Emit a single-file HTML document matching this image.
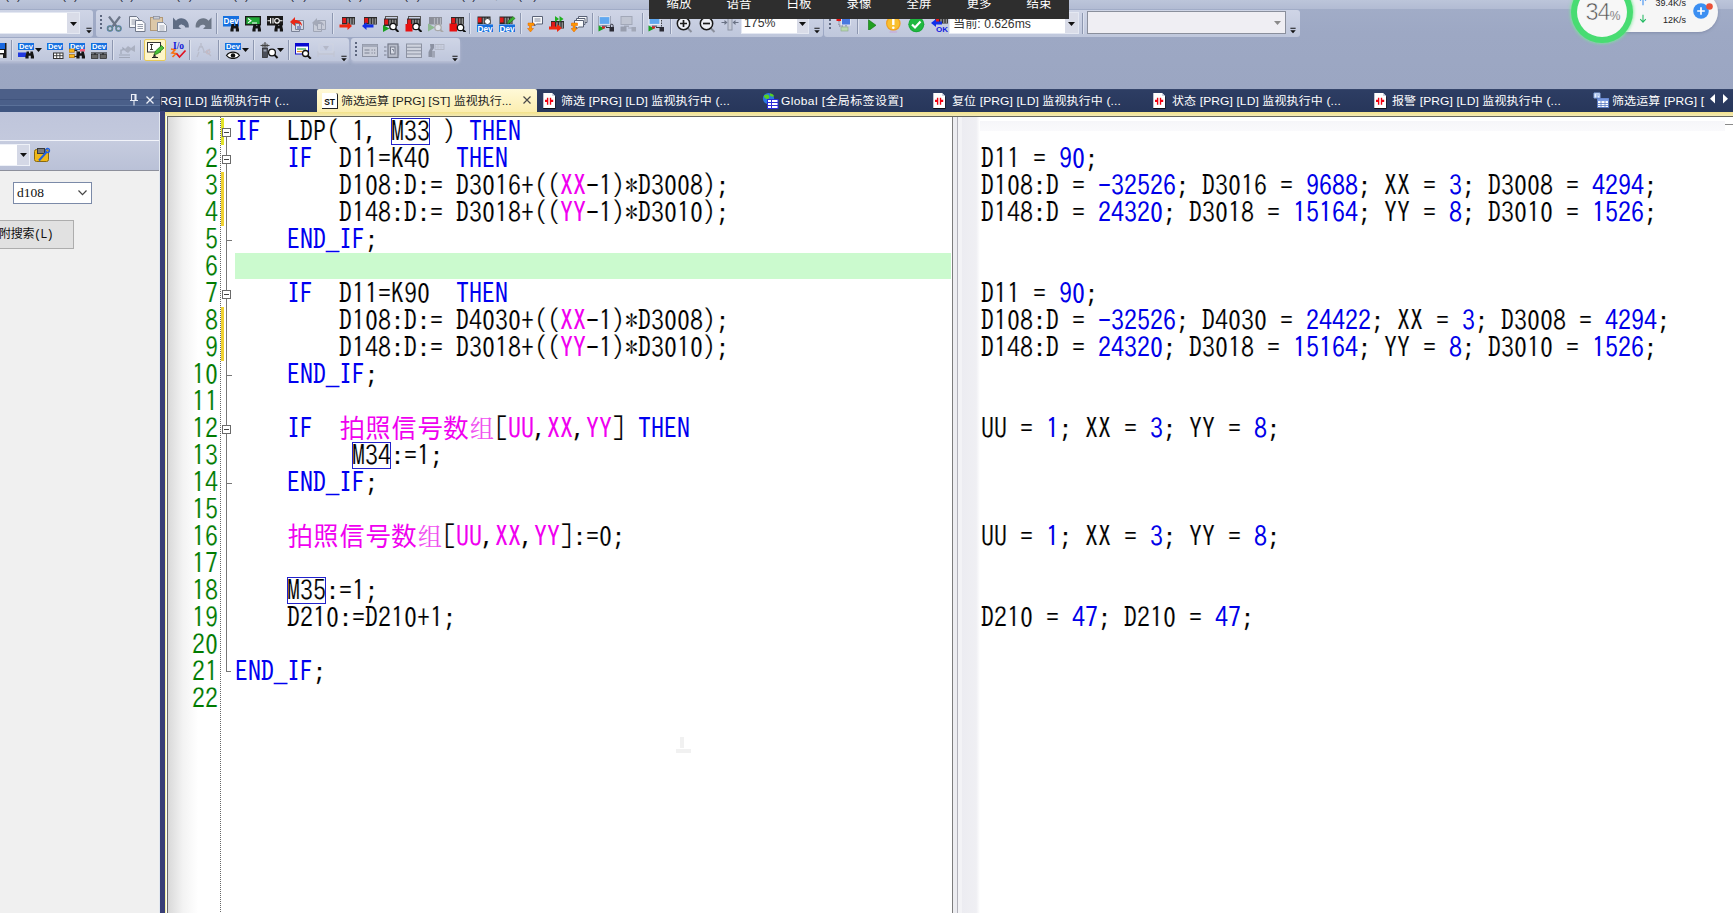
<!DOCTYPE html>
<html lang="zh"><head><meta charset="utf-8"><title>MELSOFT GX Works2</title>
<style>
*{box-sizing:border-box}
html,body{margin:0;padding:0}
body{width:1733px;height:913px;overflow:hidden;position:relative;background:#9fa9c4;font-family:"Liberation Sans","Noto Sans CJK SC",sans-serif;font-size:12px;color:#000}
.a{position:absolute}
/* top area */
#menubar{left:0;top:0;width:1733px;height:9px;background:linear-gradient(#bcc5da,#b2bbd3)}
#tbbg{left:0;top:9px;width:1733px;height:80px;background:linear-gradient(#a1acc7 0,#9da8c4 30%,#9ba6c2 100%)}
.tbp{background:linear-gradient(#cfd5e6,#bfc7dc);border-radius:3px}
/* tab bar */
#tabbar{left:0;top:89px;width:1733px;height:23px;background:linear-gradient(#3a4a70 0,#2d3d63 6%,#27365a 100%)}
#lefttitle{left:0;top:89px;width:160px;height:23px;background:linear-gradient(#4c5f88 0,#4c5f88 43%,#3d5079 44%,#4a5f89 50%,#4a5f89 68%,#6f86ad 70%,#3f5580 74%,#3f5580 100%)}
.tab{top:89.600px;height:22px;line-height:22px;letter-spacing:.12px;transform:scaleY(.9);transform-origin:0 75%;color:#fff;white-space:pre;font-size:12px}
#acttab{left:317px;top:89px;width:220px;height:23px;background:linear-gradient(#fff9d8,#fbeeb0);border-radius:2px 2px 0 0}
#yline{left:165px;top:111.500px;width:1568px;height:4.500px;background:linear-gradient(#f4e28a,#f2e9b6)}
#dline{left:166.500px;top:115.500px;width:1567px;height:1.500px;background:#66665c}
#dline2{left:166.500px;top:115.500px;width:1.500px;height:798px;background:#6a6a6a}
/* left panel */
#lp{left:0;top:112px;width:160px;height:801px;background:#f0f0f0}
#lp1{left:0;top:112px;width:160px;height:28px;background:linear-gradient(#bfc5db,#c3c9dd)}
#lp2{left:0;top:139.500px;width:160px;height:31px;background:linear-gradient(#c6ccdf,#bac1d7);border-top:1.500px solid #f2f4fa;border-bottom:1.500px solid #8d909c}
#vsplit{left:160px;top:111px;width:5px;height:802px;background:#393f76}
#lpedge{left:158.500px;top:112px;width:1.500px;height:801px;background:#e2e8f0}
/* editor */
#ed{left:165px;top:116px;width:787px;height:797px;background:#fff;border-left:1.500px solid #f3efa0}
#edgrad{left:168px;top:117px;width:30px;height:796px;background:linear-gradient(90deg,#d9d9d9,#f3f3f3 50%,#fff)}
#msplit{left:952px;top:117px;width:10px;height:796px;background:linear-gradient(90deg,#7c7c7c 0,#7c7c7c 10%,#ededf1 11%,#ededf1 50%,#b2b2ba 51%,#b2b2ba 60%,#f3f3f6 61%,#f3f3f6 100%)}
#rp{left:961px;top:116px;width:772px;height:797px;background:#fff}
#rpgrad{left:961px;top:117px;width:19px;height:796px;background:linear-gradient(90deg,#ececf1 0,#efeff3 80%,#fff 100%)}
.code{font-family:"IPAGothic","Liberation Mono","Noto Sans CJK SC",monospace;font-size:26px;line-height:27px;white-space:pre;tab-size:4;color:#000;transform:scaleY(1.05);transform-origin:0 36%;-webkit-text-stroke:0.15px #fff}
.ln{left:168px;width:50px;text-align:right;color:#007a00}
.k{color:#0000f0;-webkit-text-stroke:0}.m{color:#f000f0;-webkit-text-stroke:0}.v{color:#0000e8;-webkit-text-stroke:0}
.z{font-family:"Noto Sans Mono CJK SC","IPAGothic",monospace;line-height:0}
.zu{font-family:"Noto Serif CJK SC","Noto Sans CJK SC",serif;font-weight:400;line-height:0;display:inline-block;width:26px;text-align:center;font-size:24px;color:#f050f0}
.u{-webkit-text-stroke:0.700px #0000f0}
.bx{width:39px;height:27px;border:1px solid #2222cc}
#hl{left:235px;top:253px;width:716px;height:26px;background:#cbface}
</style></head><body>
<div class="a" id="menubar"></div>
<div class="a" id="tbbg"></div>
<div class="a" id="tabbar"></div>
<div class="a" id="lefttitle"></div>
<div class="a" id="acttab"></div>
<div class="a" id="yline"></div>
<div class="a" id="lp"></div><div class="a" id="lp1"></div><div class="a" id="lp2"></div>
<div class="a" id="vsplit"></div><div class="a" id="lpedge"></div>
<div class="a" id="ed"></div><div class="a" id="edgrad"></div>
<div class="a" id="rp"></div><div class="a" id="rpgrad"></div>
<div class="a" id="msplit"></div>
<div class="a" id="hl"></div>
<div class="a" id="dline"></div><div class="a" id="dline2"></div>
<!--EXTRA-->
<div class="a" style="left:-19px;top:-12.500px;font-size:12px;line-height:14px;color:#2a2a3a;white-space:pre">工程(P)</div>
<div class="a" style="left:38px;top:-12.500px;font-size:12px;line-height:14px;color:#2a2a3a;white-space:pre">编辑(E)</div>
<div class="a" style="left:95px;top:-12.500px;font-size:12px;line-height:14px;color:#2a2a3a;white-space:pre">搜索(F)</div>
<div class="a" style="left:152px;top:-12.500px;font-size:12px;line-height:14px;color:#2a2a3a;white-space:pre">转换(C)</div>
<div class="a" style="left:209px;top:-12.500px;font-size:12px;line-height:14px;color:#2a2a3a;white-space:pre">视图(V)</div>
<div class="a" style="left:266px;top:-12.500px;font-size:12px;line-height:14px;color:#2a2a3a;white-space:pre">在线(O)</div>
<div class="a" style="left:323px;top:-12.500px;font-size:12px;line-height:14px;color:#2a2a3a;white-space:pre">调试(B)</div>
<div class="a" style="left:380px;top:-12.500px;font-size:12px;line-height:14px;color:#2a2a3a;white-space:pre">诊断(D)</div>
<div class="a" style="left:437px;top:-12.500px;font-size:12px;line-height:14px;color:#2a2a3a;white-space:pre">工具(T)</div>
<div class="a" style="left:494px;top:-12.500px;font-size:12px;line-height:14px;color:#2a2a3a;white-space:pre">窗口(W)</div>
<div class="a" style="left:980px;top:120.500px;width:745px;height:10.500px;background:linear-gradient(#f6f6f9,#fafafc)"></div>
<div class="a" style="left:1725px;top:123.500px;width:8px;height:1.500px;background:#8a8a8a"></div>
<div class="a" style="left:680px;top:737px;width:4px;height:11px;background:radial-gradient(circle at 1px 1px,#cfcfcf 0.700px,transparent 0.900px) 0 0/2px 2px;opacity:.3"></div>
<div class="a" style="left:676px;top:749px;width:15px;height:4px;background:radial-gradient(circle at 1px 1px,#cfcfcf 0.700px,transparent 0.900px) 0 0/2px 2px;opacity:.3"></div>
<!--CODE-->
<div class="a code ln" style="top:117px">1</div>
<div class="a code" style="left:235px;top:117px"><span class="k">IF</span>  LDP( 1, M33 ) <span class="k">THEN</span></div>
<div class="a code ln" style="top:144px">2</div>
<div class="a code" style="left:235px;top:144px">    <span class="k">IF</span>  D11=K4<span class="z">0</span>  <span class="k">THEN</span></div>
<div class="a code" style="left:981px;top:144px">D11 = <span class="v">9<span class="z">0</span></span>;</div>
<div class="a code ln" style="top:171px">3</div>
<div class="a code" style="left:235px;top:171px">        D1<span class="z">0</span>8:D:= D3<span class="z">0</span>16+((<span class="m">XX</span>-1)*D3<span class="z">00</span>8);</div>
<div class="a code" style="left:981px;top:171px">D1<span class="z">0</span>8:D = <span class="v">-32526</span>; D3<span class="z">0</span>16 = <span class="v">9688</span>; XX = <span class="v">3</span>; D3<span class="z">00</span>8 = <span class="v">4294</span>;</div>
<div class="a code ln" style="top:198px">4</div>
<div class="a code" style="left:235px;top:198px">        D148:D:= D3<span class="z">0</span>18+((<span class="m">YY</span>-1)*D3<span class="z">0</span>1<span class="z">0</span>);</div>
<div class="a code" style="left:981px;top:198px">D148:D = <span class="v">2432<span class="z">0</span></span>; D3<span class="z">0</span>18 = <span class="v">15164</span>; YY = <span class="v">8</span>; D3<span class="z">0</span>1<span class="z">0</span> = <span class="v">1526</span>;</div>
<div class="a code ln" style="top:225px">5</div>
<div class="a code" style="left:235px;top:225px">    <span class="k">END<span class="u">_</span>IF</span>;</div>
<div class="a code ln" style="top:252px">6</div>
<div class="a code ln" style="top:279px">7</div>
<div class="a code" style="left:235px;top:279px">    <span class="k">IF</span>  D11=K9<span class="z">0</span>  <span class="k">THEN</span></div>
<div class="a code" style="left:981px;top:279px">D11 = <span class="v">9<span class="z">0</span></span>;</div>
<div class="a code ln" style="top:306px">8</div>
<div class="a code" style="left:235px;top:306px">        D1<span class="z">0</span>8:D:= D4<span class="z">0</span>3<span class="z">0</span>+((<span class="m">XX</span>-1)*D3<span class="z">00</span>8);</div>
<div class="a code" style="left:981px;top:306px">D1<span class="z">0</span>8:D = <span class="v">-32526</span>; D4<span class="z">0</span>3<span class="z">0</span> = <span class="v">24422</span>; XX = <span class="v">3</span>; D3<span class="z">00</span>8 = <span class="v">4294</span>;</div>
<div class="a code ln" style="top:333px">9</div>
<div class="a code" style="left:235px;top:333px">        D148:D:= D3<span class="z">0</span>18+((<span class="m">YY</span>-1)*D3<span class="z">0</span>1<span class="z">0</span>);</div>
<div class="a code" style="left:981px;top:333px">D148:D = <span class="v">2432<span class="z">0</span></span>; D3<span class="z">0</span>18 = <span class="v">15164</span>; YY = <span class="v">8</span>; D3<span class="z">0</span>1<span class="z">0</span> = <span class="v">1526</span>;</div>
<div class="a code ln" style="top:360px">1<span class="z">0</span></div>
<div class="a code" style="left:235px;top:360px">    <span class="k">END<span class="u">_</span>IF</span>;</div>
<div class="a code ln" style="top:387px">11</div>
<div class="a code ln" style="top:414px">12</div>
<div class="a code" style="left:235px;top:414px">    <span class="k">IF</span>  <span class="m">拍照信号数<span class="zu">组</span></span>[<span class="m">UU</span>,<span class="m">XX</span>,<span class="m">YY</span>] <span class="k">THEN</span></div>
<div class="a code" style="left:981px;top:414px">UU = <span class="v">1</span>; XX = <span class="v">3</span>; YY = <span class="v">8</span>;</div>
<div class="a code ln" style="top:441px">13</div>
<div class="a code" style="left:235px;top:441px">         M34:=1;</div>
<div class="a code ln" style="top:468px">14</div>
<div class="a code" style="left:235px;top:468px">    <span class="k">END<span class="u">_</span>IF</span>;</div>
<div class="a code ln" style="top:495px">15</div>
<div class="a code ln" style="top:522px">16</div>
<div class="a code" style="left:235px;top:522px">    <span class="m">拍照信号数<span class="zu">组</span></span>[<span class="m">UU</span>,<span class="m">XX</span>,<span class="m">YY</span>]:=<span class="z">0</span>;</div>
<div class="a code" style="left:981px;top:522px">UU = <span class="v">1</span>; XX = <span class="v">3</span>; YY = <span class="v">8</span>;</div>
<div class="a code ln" style="top:549px">17</div>
<div class="a code ln" style="top:576px">18</div>
<div class="a code" style="left:235px;top:576px">    M35:=1;</div>
<div class="a code ln" style="top:603px">19</div>
<div class="a code" style="left:235px;top:603px">    D21<span class="z">0</span>:=D21<span class="z">0</span>+1;</div>
<div class="a code" style="left:981px;top:603px">D21<span class="z">0</span> = <span class="v">47</span>; D21<span class="z">0</span> = <span class="v">47</span>;</div>
<div class="a code ln" style="top:630px">2<span class="z">0</span></div>
<div class="a code ln" style="top:657px">21</div>
<div class="a code" style="left:235px;top:657px"><span class="k">END<span class="u">_</span>IF</span>;</div>
<div class="a code ln" style="top:684px">22</div>
<div class="a bx" style="left:391px;top:118px"></div>
<div class="a bx" style="left:352px;top:442px"></div>
<div class="a bx" style="left:287px;top:577px"></div>
<!--GUTTER-->
<div class="a" style="left:220px;top:117px;width:1px;height:796px;background:repeating-linear-gradient(#666 0,#666 1px,transparent 1px,transparent 2px)"></div>
<div class="a" style="left:221px;top:118px;width:3px;height:26.5px;background:#e2e428"></div>
<div class="a" style="left:221px;top:172px;width:3px;height:53.5px;background:#f0d230"></div>
<div class="a" style="left:221px;top:307px;width:3px;height:53.5px;background:#f0d230"></div>
<div class="a" style="left:226.200px;top:131px;width:1px;height:540px;background:#777"></div>
<div class="a" style="left:226.200px;top:671px;width:5px;height:1px;background:#777"></div>
<div class="a" style="left:226.200px;top:240px;width:6px;height:1px;background:#777"></div>
<div class="a" style="left:226.200px;top:375px;width:6px;height:1px;background:#777"></div>
<div class="a" style="left:226.200px;top:483px;width:6px;height:1px;background:#777"></div>
<div class="a" style="left:222.200px;top:127.5px;width:9px;height:9px;background:#fff;border:1px solid #6a6a6a"></div>
<div class="a" style="left:224.200px;top:131.5px;width:5px;height:1px;background:#444"></div>
<div class="a" style="left:222.200px;top:154.5px;width:9px;height:9px;background:#fff;border:1px solid #6a6a6a"></div>
<div class="a" style="left:224.200px;top:158.5px;width:5px;height:1px;background:#444"></div>
<div class="a" style="left:222.200px;top:289.5px;width:9px;height:9px;background:#fff;border:1px solid #6a6a6a"></div>
<div class="a" style="left:224.200px;top:293.5px;width:5px;height:1px;background:#444"></div>
<div class="a" style="left:222.200px;top:424.5px;width:9px;height:9px;background:#fff;border:1px solid #6a6a6a"></div>
<div class="a" style="left:224.200px;top:428.5px;width:5px;height:1px;background:#444"></div>
<!--TABS-->
<div class="a tab" id="tab0" style="left:159.500px;clip-path:inset(0 0 0 2px);color:#fff">RG] [LD] 监视执行中 (...</div>
<div class="a tab" id="tab1" style="letter-spacing:0;left:341px;color:#1e1e1e">筛选运算 [PRG] [ST] 监视执行...</div>
<div class="a" style="left:322px;top:93px;width:16px;height:16px;background:#fff;border-right:1px solid #222;border-bottom:1px solid #222;border-radius:0 2px 0 0;font:bold 8.500px/18px 'Liberation Sans',sans-serif;text-align:center;color:#111;letter-spacing:-0.3px">ST</div>
<div class="a tab" id="tab2" style="left:561px;color:#fff">筛选 [PRG] [LD] 监视执行中 (...</div>
<svg class="a" style="left:543px;top:93px" width="13" height="16" viewBox="0 0 13 16"><path d="M0.300 0h8.700l3 3v12h-11.700z" fill="#fff"/><path d="M9 0v3h3z" fill="#cfd4e2"/><path d="M0.300 15h11.700v1h-11.700z" fill="#0c0c14"/><path d="M12 3.500h.8v12.500h-.8z" fill="#1a1a28"/><path d="M2 6.700h2.500v2.300h-2.500zM7.700 6.700h2.500v2.300h-2.500z" fill="#f00010"/><path d="M3.900 4.700h1.400v7.100h-1.400zM6.800 4.700h1.400v7.100h-1.400z" fill="#f00010"/></svg>
<div class="a tab" id="tab3" style="letter-spacing:.38px;left:781px;color:#fff">Global [全局标签设置]</div>
<svg class="a" style="left:762px;top:92px" width="17" height="17" viewBox="0 0 17 17"><circle cx="6.500" cy="6.500" r="5.600" fill="#2a78e0"/><path d="M2 3.500c2-1.500 4-1.500 5 0s0 3.500-1.500 3.500-2.500-1-3.500-2zM8 1.500c2 0 3.500 1 4 2.500-1 1-3 1-4-.5z" fill="#58d020"/><rect x="5.500" y="7.500" width="10.500" height="9" fill="#fff" stroke="#2c2cd8" stroke-width="1"/><path d="M5.500 10.500h10.500M5.500 13.500h10.500M9.500 7.500v9" stroke="#2c2cd8" stroke-width="1"/></svg>
<div class="a tab" id="tab4" style="left:952px;color:#fff">复位 [PRG] [LD] 监视执行中 (...</div>
<svg class="a" style="left:933px;top:93px" width="13" height="16" viewBox="0 0 13 16"><path d="M0.300 0h8.700l3 3v12h-11.700z" fill="#fff"/><path d="M9 0v3h3z" fill="#cfd4e2"/><path d="M0.300 15h11.700v1h-11.700z" fill="#0c0c14"/><path d="M12 3.500h.8v12.500h-.8z" fill="#1a1a28"/><path d="M2 6.700h2.500v2.300h-2.500zM7.700 6.700h2.500v2.300h-2.500z" fill="#f00010"/><path d="M3.900 4.700h1.400v7.100h-1.400zM6.800 4.700h1.400v7.100h-1.400z" fill="#f00010"/></svg>
<div class="a tab" id="tab5" style="left:1172px;color:#fff">状态 [PRG] [LD] 监视执行中 (...</div>
<svg class="a" style="left:1153px;top:93px" width="13" height="16" viewBox="0 0 13 16"><path d="M0.300 0h8.700l3 3v12h-11.700z" fill="#fff"/><path d="M9 0v3h3z" fill="#cfd4e2"/><path d="M0.300 15h11.700v1h-11.700z" fill="#0c0c14"/><path d="M12 3.500h.8v12.500h-.8z" fill="#1a1a28"/><path d="M2 6.700h2.500v2.300h-2.500zM7.700 6.700h2.500v2.300h-2.500z" fill="#f00010"/><path d="M3.900 4.700h1.400v7.100h-1.400zM6.800 4.700h1.400v7.100h-1.400z" fill="#f00010"/></svg>
<div class="a tab" id="tab6" style="left:1392px;color:#fff">报警 [PRG] [LD] 监视执行中 (...</div>
<svg class="a" style="left:1374px;top:93px" width="13" height="16" viewBox="0 0 13 16"><path d="M0.300 0h8.700l3 3v12h-11.700z" fill="#fff"/><path d="M9 0v3h3z" fill="#cfd4e2"/><path d="M0.300 15h11.700v1h-11.700z" fill="#0c0c14"/><path d="M12 3.500h.8v12.500h-.8z" fill="#1a1a28"/><path d="M2 6.700h2.500v2.300h-2.500zM7.700 6.700h2.500v2.300h-2.500z" fill="#f00010"/><path d="M3.900 4.700h1.400v7.100h-1.400zM6.800 4.700h1.400v7.100h-1.400z" fill="#f00010"/></svg>
<div class="a tab" id="tab7" style="left:1612px;color:#fff">筛选运算 [PRG] [</div>
<svg class="a" style="left:1593px;top:92px" width="17" height="17" viewBox="0 0 17 17"><path d="M1 1h6v5h-6z" fill="#e8f0ff" stroke="#88a8e0" stroke-width="1"/><path d="M3 3h3M3 5h2" stroke="#6088d0" stroke-width=".8"/><rect x="4.500" y="6.500" width="11" height="9" fill="#fff" stroke="#5878c0" stroke-width="1"/><rect x="4.500" y="6.500" width="11" height="2.600" fill="#7898e0"/><path d="M4.500 11.500h11M4.500 13.500h11M8 9v6.500M12 9v6.500" stroke="#5878c0" stroke-width=".8"/></svg>
<svg class="a" style="left:128px;top:93px" width="12" height="14" viewBox="0 0 12 14"><path d="M3.500 1.500h4.500v6h-4.500zM2 7.500h8M6 7.500v5M7 1.500v6" fill="none" stroke="#e8ecf5" stroke-width="1.100"/></svg>
<svg class="a" style="left:145px;top:95px" width="10" height="10" viewBox="0 0 10 10"><path d="M1.500 1.500l7 7M8.500 1.500l-7 7" stroke="#eef1f8" stroke-width="1.300"/></svg>
<svg class="a" style="left:522px;top:95px" width="10" height="10" viewBox="0 0 10 10"><path d="M1.500 1.500l7 7M8.500 1.500l-7 7" stroke="#4a4a4a" stroke-width="1.200"/></svg>
<svg class="a" style="left:1706px;top:93px" width="27" height="12" viewBox="0 0 27 12"><path d="M9 1v9.500l-5-4.750z" fill="#fff"/><path d="M17 1v9.500l5-4.750z" fill="#fff"/></svg>
<!--TOOLBAR-->
<div class="a tbp" style="left:-4px;top:10px;width:97px;height:27px"></div>
<div class="a" style="left:-2px;top:12px;width:82px;height:22px;background:#fff;border:1px solid #e4e8f2"></div>
<div class="a" style="left:67px;top:13px;width:12px;height:20px;background:#d9dce8"></div>
<svg class="a" style="left:69.5px;top:21.5px" width="7" height="4" viewBox="0 0 7 4"><path d="M0 0h7l-3.500 4z" fill="#111"/></svg>
<svg class="a" style="left:85.5px;top:26.5px" width="6" height="7" viewBox="0 0 8 8"><path d="M0.500 1h7" stroke="#111" stroke-width="1.300"/><path d="M0.300 3.500h7.400l-3.700 4z" fill="#111"/></svg>
<div class="a tbp" style="left:96px;top:10px;width:727px;height:27px"></div>
<div class="a" style="left:100px;top:15px;width:2px;height:14px;background:repeating-linear-gradient(#5c667e 0,#5c667e 2px,transparent 2px,transparent 4px)"></div>
<svg class="a" style="left:106px;top:16px" width="17" height="16" viewBox="0 0 17 16"><path d="M3 0.500l7.500 10M14 0.500l-7.500 10" stroke="#6c7688" stroke-width="2.200"/><circle cx="4" cy="12.500" r="2.400" fill="none" stroke="#4a78b8" stroke-width="1.700"/><circle cx="12.500" cy="12.500" r="2.400" fill="none" stroke="#4a78b8" stroke-width="1.700"/><circle cx="4" cy="12.500" r="2.400" fill="none" stroke="#8a9a50" stroke-width=".6"/><circle cx="12.500" cy="12.500" r="2.400" fill="none" stroke="#8a9a50" stroke-width=".6"/></svg>
<svg class="a" style="left:129px;top:16px" width="17" height="16" viewBox="0 0 17 16"><path d="M0.500 0.500h7l2.500 2.500v8.500h-9.500z" fill="#f4f5f8" stroke="#70788a"/><path d="M2.500 4h5M2.500 6h5M2.500 8h5" stroke="#8a92a2" stroke-width=".9"/><path d="M6.500 4.500h6.500l3 3v8h-9.500z" fill="#fbfbfd" stroke="#70788a"/><path d="M8.500 8.500h5.500M8.500 10.500h5.500M8.500 12.500h5.500" stroke="#8a92a2" stroke-width=".9"/></svg>
<svg class="a" style="left:150px;top:16px" width="17" height="16" viewBox="0 0 17 16"><rect x="0.500" y="1.500" width="12" height="13" fill="#dcc8a8" stroke="#b09878"/><rect x="3.500" y="0.500" width="6" height="2.500" fill="#c8ccd6" stroke="#8a90a0" stroke-width=".8"/><path d="M7.500 6.500h6l3 3v6h-9z" fill="#f6f7fa" stroke="#8890a0"/><path d="M9.500 10h5M9.500 12h5M9.500 14h5" stroke="#a0a6b4" stroke-width=".9"/></svg>
<svg class="a" style="left:173px;top:16px" width="17" height="16" viewBox="0 0 17 16"><path d="M0 1.500v11.500h8.500l-2.500-2.800c1.500-2.200 5.500-2 6.300 1.300h3.500c.5-5.500-3-9.500-7.800-9.300-2.200.1-3.800 1.200-5 2.500z" fill="#5e6c84"/><path d="M8 12.500l-2-2.300 2.500-1.500" fill="none" stroke="#c8d0e2" stroke-width="1"/></svg>
<svg class="a" style="left:194.5px;top:16px" width="17" height="16" viewBox="0 0 17 16"><path d="M16.500 1.500v11.500h-8.500l2.500-2.800c-1.500-2.200-5.500-2-6.300 1.300h-3.500c-.5-5.500 3-9.500 7.800-9.300 2.200.1 3.800 1.200 5 2.500z" fill="#6c7686"/></svg>
<div class="a" style="left:215.5px;top:13px;width:2px;height:21px;border-left:1px solid #8d97b0;border-right:1px solid #dde2ee"></div>
<svg class="a" style="left:222.5px;top:16px" width="17" height="16" viewBox="0 0 17 16"><rect x="0" y="0" width="16" height="10.500" fill="#1670e0"/><text x="8" y="8.200" font-family="Liberation Sans,sans-serif" font-weight="bold" font-size="9.500" fill="#fff" text-anchor="middle" textLength="15" lengthAdjust="spacingAndGlyphs">Dev</text><path d="M8.600 8h2.400v2h1.400v-2h2.400l1.200 5.500v2h-3.200v-3h-2.200v3h-3.200v-2z" fill="#141414"/></svg>
<svg class="a" style="left:245px;top:16px" width="17" height="16" viewBox="0 0 17 16"><rect x="0" y="0" width="16" height="9.500" fill="#1a1a1a"/><rect x="1.300" y="1.300" width="13.400" height="6.800" fill="#22a838"/><path d="M3 2.500l3 2.200-3 2.200M7 7h5" stroke="#fff" stroke-width="1.100" fill="none"/><path d="M8.600 8h2.400v2h1.400v-2h2.400l1.200 5.500v2h-3.200v-3h-2.200v3h-3.200v-2z" fill="#141414"/></svg>
<svg class="a" style="left:267px;top:16px" width="17" height="16" viewBox="0 0 17 16"><rect x="0" y="0" width="16" height="9.500" fill="#1a1a1a"/><path d="M0.500 4.800h3M12.500 4.800h3M3.600 2v5.600M6 2v5.600" stroke="#fff" stroke-width="1.100"/><circle cx="10" cy="4.800" r="2.300" fill="none" stroke="#fff" stroke-width="1.100"/><path d="M8.600 8h2.400v2h1.400v-2h2.400l1.200 5.500v2h-3.200v-3h-2.200v3h-3.200v-2z" fill="#141414"/></svg>
<svg class="a" style="left:289px;top:16px" width="17" height="16" viewBox="0 0 17 16"><path d="M2.500 7.500h8v8h-8zM6.500 4.500h8v9h-8z" fill="#d4d8e4" stroke="#7a8296" stroke-width="1"/><path d="M1 6l5-5v3c4 0 7 2 7 6-1.500-2.500-4-3-7-3v3z" fill="#e82818"/><rect x="8" y="10" width="4" height="3" fill="#8890c0"/></svg>
<svg class="a" style="left:311px;top:16px" width="17" height="16" viewBox="0 0 17 16"><path d="M2.500 7.500h8v8h-8zM6.500 4.500h8v9h-8z" fill="#c8ccd8" stroke="#a0a6b6" stroke-width="1"/><path d="M1 7l5-5v3c4 0 7 1.500 7 5-1.500-2-4-2.500-7-2.500v3z" fill="#a4a9b8"/></svg>
<div class="a" style="left:331.5px;top:13px;width:2px;height:21px;border-left:1px solid #8d97b0;border-right:1px solid #dde2ee"></div>
<svg class="a" style="left:338.5px;top:16px" width="17" height="16" viewBox="0 0 17 16"><rect x="3" y="1" width="13" height="7.500" fill="#2a2a2a"/><rect x="3.5" y="2" width="3.600" height="5" fill="#e01818"/><path d="M9 2.2v6M11.7 2.2v6M14.4 2.2v6" stroke="#8a8a8a" stroke-width="1.600"/><path d="M0.500 8.500h8v-2.500l4.500 4-4.500 4v-2.500h-8z" fill="#f02810"/></svg>
<svg class="a" style="left:360.5px;top:16px" width="17" height="16" viewBox="0 0 17 16"><rect x="3" y="1" width="13" height="7.500" fill="#2a2a2a"/><rect x="3.5" y="2" width="3.600" height="5" fill="#e01818"/><path d="M9 2.2v6M11.7 2.2v6M14.4 2.2v6" stroke="#8a8a8a" stroke-width="1.600"/><path d="M12.500 8.500h-7v-2.500l-4.500 4 4.500 4v-2.500h7z" fill="#1030e8"/></svg>
<svg class="a" style="left:383px;top:16px" width="17" height="16" viewBox="0 0 17 16"><rect x="2.500" y="0.500" width="12" height="9" fill="none" stroke="#555" stroke-width="1"/><rect x="1" y="2.5" width="13" height="7.500" fill="#2a2a2a"/><rect x="1.5" y="3.5" width="3.600" height="5" fill="#e01818"/><path d="M7 3.7v6M9.7 3.7v6M12.4 3.7v6" stroke="#8a8a8a" stroke-width="1.600"/><path d="M0 9l6.500 3.500-6.500 3.500z" fill="#18a020"/><path d="M12.24 12.74l3.200 3.200" stroke="#111" stroke-width="2"/><circle cx="10" cy="10.5" r="3.2" fill="#fff" stroke="#111" stroke-width="1.300"/></svg>
<svg class="a" style="left:405px;top:16px" width="17" height="16" viewBox="0 0 17 16"><rect x="3.500" y="0.500" width="12" height="9" fill="none" stroke="#555" stroke-width="1"/><rect x="2" y="2.5" width="13" height="7.500" fill="#2a2a2a"/><rect x="2.5" y="3.5" width="3.600" height="5" fill="#e01818"/><path d="M8 3.7v6M10.7 3.7v6M13.4 3.7v6" stroke="#8a8a8a" stroke-width="1.600"/><rect x="0.500" y="8" width="7" height="7.500" fill="#e81010"/><path d="M13.24 12.74l3.200 3.200" stroke="#111" stroke-width="2"/><circle cx="11" cy="10.5" r="3.2" fill="#fff" stroke="#111" stroke-width="1.300"/></svg>
<svg class="a" style="left:427px;top:16px" width="17" height="16" viewBox="0 0 17 16"><rect x="2" y="1" width="13" height="7.500" fill="#8c8f99"/><path d="M7.5 2v6M10.5 2v6M13.5 2v6" stroke="#b4b7c0" stroke-width="1.200"/><path d="M1 7.500l7 4-7 4z" fill="#8cb890"/><path d="M13.24 13.74l3.200 3.200" stroke="#a8a8a8" stroke-width="2"/><circle cx="11" cy="11.5" r="3.2" fill="#dfe2ea" stroke="#a8a8a8" stroke-width="1.300"/></svg>
<svg class="a" style="left:449px;top:16px" width="17" height="16" viewBox="0 0 17 16"><rect x="2" y="1" width="13" height="7.500" fill="#2a2a2a"/><rect x="2.5" y="2" width="3.600" height="5" fill="#e01818"/><path d="M8 2.2v6M10.7 2.2v6M13.4 2.2v6" stroke="#8a8a8a" stroke-width="1.600"/><rect x="0.500" y="7.500" width="7.500" height="8" fill="#e81010"/><path d="M13.74 13.74l3.200 3.200" stroke="#111" stroke-width="2"/><circle cx="11.5" cy="11.5" r="3.2" fill="#fff" stroke="#111" stroke-width="1.300"/></svg>
<div class="a" style="left:469px;top:13px;width:2px;height:21px;border-left:1px solid #8d97b0;border-right:1px solid #dde2ee"></div>
<svg class="a" style="left:476.5px;top:16px" width="17" height="16" viewBox="0 0 17 16"><rect x="0.5" y="0.5" width="13" height="7.500" fill="#2a2a2a"/><rect x="1" y="1.5" width="3.600" height="5" fill="#e01818"/><path d="M6.5 1.7v6M9.2 1.7v6M11.9 1.7v6" stroke="#8a8a8a" stroke-width="1.600"/><circle cx="10.500" cy="5.500" r="3" fill="#fff" stroke="#222" stroke-width=".8"/><rect x="0" y="8.5" width="16" height="7.500" fill="#1670e0"/><text x="8" y="15.5" font-family="Liberation Sans,sans-serif" font-weight="bold" font-size="8.500" fill="#fff" text-anchor="middle" textLength="15" lengthAdjust="spacingAndGlyphs">Dev</text></svg>
<svg class="a" style="left:498.5px;top:16px" width="17" height="16" viewBox="0 0 17 16"><rect x="0.5" y="0.5" width="13" height="7.500" fill="#2a2a2a"/><rect x="1" y="1.5" width="3.600" height="5" fill="#e01818"/><path d="M6.5 1.7v6M9.2 1.7v6M11.9 1.7v6" stroke="#8a8a8a" stroke-width="1.600"/><path d="M8 8l1.500-3.500 4.500-4 2 2-4.500 4z" fill="#38b030" stroke="#186010" stroke-width=".6"/><rect x="0" y="8.5" width="16" height="7.500" fill="#1670e0"/><text x="8" y="15.5" font-family="Liberation Sans,sans-serif" font-weight="bold" font-size="8.500" fill="#fff" text-anchor="middle" textLength="15" lengthAdjust="spacingAndGlyphs">Dev</text></svg>
<div class="a" style="left:519.5px;top:13px;width:2px;height:21px;border-left:1px solid #8d97b0;border-right:1px solid #dde2ee"></div>
<svg class="a" style="left:527px;top:16px" width="17" height="16" viewBox="0 0 17 16"><path d="M5.500 0.500h10v7.500h-6l-2 2v-2h-2z" fill="#f8f9fb" stroke="#5a6276" stroke-width="1"/><path d="M7.500 3h6M7.500 5h6" stroke="#7a8296" stroke-width=".9"/><path d="M1 7h6v2.500h-2.500v3h2l-3 3.500-3-3.500h2v-3h-1.500z" fill="#ff9800" stroke="#e06000" stroke-width=".5"/></svg>
<svg class="a" style="left:549px;top:16px" width="17" height="16" viewBox="0 0 17 16"><rect x="2" y="5" width="13" height="7.500" fill="#2a2a2a"/><rect x="2.5" y="6" width="3.600" height="5" fill="#e01818"/><path d="M8 6.2v6M10.7 6.2v6M13.4 6.2v6" stroke="#8a8a8a" stroke-width="1.600"/><path d="M6 0l4 3-4 3zM10.500 0l4 3-4 3z" fill="#20b020"/><path d="M0 10.500h8v-2.500l5 4-5 4v-2.500h-8z" fill="#f02810"/></svg>
<svg class="a" style="left:571px;top:16px" width="17" height="16" viewBox="0 0 17 16"><path d="M7.500 0.500h8.500v6h-8.500z" fill="#f8f9fb" stroke="#5a6276"/><path d="M5.500 2.500h8.500v6h-8.500z" fill="#f8f9fb" stroke="#5a6276"/><path d="M3.500 4.500h9v6.500h-5l-2 2v-2h-2z" fill="#f8f9fb" stroke="#5a6276"/><path d="M0.500 7h6v2.500h-2.500v3h2l-3 3.500-3-3.500h2v-3h-2z" fill="#ff9800" stroke="#e06000" stroke-width=".5"/></svg>
<div class="a" style="left:591.5px;top:13px;width:2px;height:21px;border-left:1px solid #8d97b0;border-right:1px solid #dde2ee"></div>
<svg class="a" style="left:598px;top:16px" width="17" height="16" viewBox="0 0 17 16"><rect x="1" y="0.500" width="11" height="8" fill="#60a8f0" stroke="#e8ecf4" stroke-width="1.200"/><rect x="0.300" y="-0.200" width="12.400" height="9.400" fill="none" stroke="#788098" stroke-width=".6"/><path d="M4 9.500h5v1.500h-5z" fill="#687088"/><path d="M0.500 9.500l6 3-6 3z" fill="#18a020"/><rect x="4" y="10.500" width="3" height="2" fill="#e02020"/><path d="M8 11.500h4" stroke="#333" stroke-width="1"/><rect x="11.500" y="11" width="4.500" height="4.500" fill="#2a2a34"/><path d="M12.500 11v-1.500a1.300 1.300 0 0 1 2.600 0v1.500" fill="none" stroke="#2a2a34" stroke-width=".9"/></svg>
<svg class="a" style="left:620px;top:16px" width="17" height="16" viewBox="0 0 17 16"><rect x="1" y="0.500" width="11" height="8" fill="#c0c5d2" stroke="#a2a8b8" stroke-width="1"/><path d="M4 9.500h5v1.500h-5z" fill="#a2a8b8"/><rect x="0.500" y="10.500" width="6" height="5" fill="#989eae"/><path d="M8 12h4" stroke="#a2a8b8" stroke-width="1"/><rect x="11.500" y="11" width="4.500" height="4.500" fill="#a2a8b8"/></svg>
<div class="a" style="left:641.5px;top:13px;width:2px;height:21px;border-left:1px solid #8d97b0;border-right:1px solid #dde2ee"></div>
<svg class="a" style="left:648px;top:16px" width="17" height="16" viewBox="0 0 17 16"><rect x="1" y="0.500" width="11" height="8" fill="#60a8f0" stroke="#e8ecf4" stroke-width="1.200"/><path d="M4 9.500h5v1.500h-5z" fill="#687088"/><path d="M0.500 9.500l6 3-6 3z" fill="#18a020"/><rect x="4" y="10.500" width="3" height="2" fill="#e02020"/><path d="M8 11.500h4" stroke="#333" stroke-width="1"/><rect x="11.500" y="11" width="4.500" height="4.500" fill="#2a2a34"/><path d="M13.500 4v7" stroke="#333" stroke-width=".9" stroke-dasharray="1.500 1"/></svg>
<div class="a" style="left:669.5px;top:13px;width:2px;height:21px;border-left:1px solid #8d97b0;border-right:1px solid #dde2ee"></div>
<svg class="a" style="left:676px;top:16px" width="18" height="17" viewBox="0 0 18 17"><path d="M11 11.500l4.500 4.500" stroke="#8a8f9c" stroke-width="2"/><circle cx="7.500" cy="7.500" r="6.200" fill="#eef0f6" stroke="#1a1a1a" stroke-width="1.500"/><path d="M4 7.500h7M7.500 4v7" stroke="#1a1a1a" stroke-width="1.700"/></svg>
<svg class="a" style="left:698.5px;top:16px" width="18" height="17" viewBox="0 0 18 17"><path d="M11 11.500l4.500 4.500" stroke="#8a8f9c" stroke-width="2"/><circle cx="7.500" cy="7.500" r="6.200" fill="#eef0f6" stroke="#1a1a1a" stroke-width="1.500"/><path d="M4 7.500h7" stroke="#1a1a1a" stroke-width="1.700"/></svg>
<svg class="a" style="left:721px;top:16px" width="18" height="16" viewBox="0 0 18 16"><rect x="7" y="1" width="4" height="13" fill="#c4c9d6" stroke="#8e95a6" stroke-width="1"/><path d="M0.500 6.500h4M13.500 6.500h4" stroke="#6a7284" stroke-width="1.200"/><path d="M3.500 4l3 2.500-3 2.500zM14.500 4l-3 2.500 3 2.500z" fill="#6a7284"/></svg>
<div class="a" style="left:741px;top:12px;width:68px;height:22px;background:#fff;border:1px solid #e4e8f2"></div>
<div class="a" style="left:797px;top:13px;width:11px;height:20px;background:#d9dce8"></div>
<div class="a" style="left:744px;top:13.500px;font-size:12.300px;line-height:19px;color:#333">175%</div>
<svg class="a" style="left:799px;top:21.5px" width="7" height="4" viewBox="0 0 7 4"><path d="M0 0h7l-3.500 4z" fill="#111"/></svg>
<svg class="a" style="left:814px;top:26.5px" width="6" height="7" viewBox="0 0 8 8"><path d="M0.500 1h7" stroke="#111" stroke-width="1.300"/><path d="M0.300 3.500h7.400l-3.700 4z" fill="#111"/></svg>
<div class="a tbp" style="left:824px;top:10px;width:476px;height:27px"></div>
<div class="a" style="left:829px;top:15px;width:2px;height:14px;background:repeating-linear-gradient(#5c667e 0,#5c667e 2px,transparent 2px,transparent 4px)"></div>
<svg class="a" style="left:836px;top:16px" width="17" height="16" viewBox="0 0 17 16"><rect x="0.500" y="0" width="5" height="5" fill="#e01010"/><rect x="5.500" y="2.500" width="9" height="6.500" fill="#4878e0" stroke="#dfe4f0" stroke-width="1"/><path d="M3 5v5h4M10 9v3" stroke="#6a7080" stroke-width=".9" fill="none" stroke-dasharray="1.500 1"/><rect x="5" y="11" width="7" height="4" fill="#b8d8b0" stroke="#8aa888" stroke-width=".6"/></svg>
<div class="a" style="left:857px;top:13px;width:2px;height:21px;border-left:1px solid #8d97b0;border-right:1px solid #dde2ee"></div>
<svg class="a" style="left:868px;top:19px" width="8" height="10.5" viewBox="0 0 8 10"><path d="M0.500 0.500l7.500 5.500-7.500 5.500z" fill="#20a020" stroke="#107010" stroke-width=".6"/></svg>
<svg class="a" style="left:885px;top:16px" width="17" height="17" viewBox="0 0 17 17"><circle cx="8.300" cy="7.500" r="7.300" fill="#f0a020"/><circle cx="8.300" cy="7.500" r="6" fill="#f8c030"/><path d="M8.300 2.500v6.500" stroke="#fff" stroke-width="2.400"/><circle cx="8.300" cy="11.800" r="1.300" fill="#fff"/><ellipse cx="8.300" cy="16" rx="4" ry="1.500" fill="#c8a8d8" opacity=".6"/></svg>
<svg class="a" style="left:907.5px;top:15.5px" width="17" height="17" viewBox="0 0 17 17"><circle cx="8.300" cy="8.300" r="8" fill="#18a838"/><circle cx="8.300" cy="8.300" r="7" fill="#20b840"/><path d="M4 8.500l3 3 5.500-6" fill="none" stroke="#fff" stroke-width="2.200"/></svg>
<svg class="a" style="left:930px;top:16px" width="18" height="17" viewBox="0 0 18 17"><rect x="5" y="0" width="13" height="7.500" fill="#2a2a2a"/><rect x="5.5" y="1" width="3.600" height="5" fill="#e01818"/><path d="M11 1.2v6M13.7 1.2v6M16.4 1.2v6" stroke="#8a8a8a" stroke-width="1.600"/><path d="M12 5.500h-6v-2.500l-5 4 5 4v-2.500h6z" fill="#1030e8"/><text x="12" y="16" font-family="Liberation Sans,sans-serif" font-size="8" font-weight="bold" fill="#1020e0" text-anchor="middle">OK</text></svg>
<div class="a" style="left:949px;top:12px;width:130px;height:22px;background:#fff;border:1px solid #e4e8f2"></div>
<div class="a" style="left:1065px;top:13px;width:13px;height:20px;background:#d9dce8"></div>
<div class="a" style="left:953px;top:14.500px;font-size:12.200px;line-height:19px;color:#333;white-space:pre">当前: 0.626ms</div>
<svg class="a" style="left:1068px;top:21.5px" width="7" height="4" viewBox="0 0 7 4"><path d="M0 0h7l-3.500 4z" fill="#111"/></svg>
<div class="a" style="left:1081.5px;top:13px;width:2px;height:21px;border-left:1px solid #8d97b0;border-right:1px solid #dde2ee"></div>
<div class="a" style="left:1087px;top:11px;width:199px;height:23px;background:#efeef3;border:1px solid #8a8f9c"></div>
<svg class="a" style="left:1274px;top:21px" width="7" height="4" viewBox="0 0 7 4"><path d="M0 0h7l-3.500 4z" fill="#8a8a8a"/></svg>
<svg class="a" style="left:1290px;top:26.5px" width="6" height="7" viewBox="0 0 8 8"><path d="M0.500 1h7" stroke="#111" stroke-width="1.300"/><path d="M0.300 3.500h7.400l-3.700 4z" fill="#111"/></svg>
<div class="a tbp" style="left:-4px;top:38px;width:353px;height:23px;box-shadow:0 2px 3px rgba(196,203,222,.7)"></div>
<svg class="a" style="left:0px;top:43px" width="8" height="16" viewBox="0 0 8 16"><rect x="-6" y="0" width="12.500" height="15" fill="#1a1a1a"/><rect x="-6" y="0" width="11" height="6" fill="#1868e0"/><rect x="-6" y="7" width="10" height="3" fill="#fff"/><rect x="-6" y="11.500" width="9" height="3.500" fill="#e8e8e8"/></svg>
<div class="a" style="left:10.5px;top:40px;width:2px;height:20px;border-left:1px solid #8d97b0;border-right:1px solid #dde2ee"></div>
<svg class="a" style="left:18px;top:43px" width="17" height="16" viewBox="0 0 17 16"><rect x="0" y="0" width="16" height="7" fill="#1670e0"/><text x="8" y="6.300" font-family="Liberation Sans,sans-serif" font-weight="bold" font-size="8" fill="#fff" text-anchor="middle" textLength="14" lengthAdjust="spacingAndGlyphs">Dev</text><rect x="0" y="9.500" width="8" height="4.500" fill="#2038e0"/><path d="M8.600 8.500h2.400v1.800h1.400v-1.800h2.400l1.200 5v2h-3.200v-2.800h-2.200v2.800h-3.200v-2z" fill="#141414"/></svg>
<svg class="a" style="left:34.5px;top:47.5px" width="7" height="4" viewBox="0 0 7 4"><path d="M0 0h7l-3.500 4z" fill="#111"/></svg>
<svg class="a" style="left:47px;top:43px" width="17" height="16" viewBox="0 0 17 16"><rect x="0" y="0" width="16" height="7" fill="#1670e0"/><text x="8" y="6.300" font-family="Liberation Sans,sans-serif" font-weight="bold" font-size="8" fill="#fff" text-anchor="middle" textLength="14" lengthAdjust="spacingAndGlyphs">Dev</text><rect x="6.500" y="10" width="9.500" height="5.500" fill="#fff" stroke="#333" stroke-width="1"/><path d="M6.500 12.700h9.500M9.700 10v5.500M12.900 10v5.500" stroke="#333" stroke-width=".9"/></svg>
<svg class="a" style="left:69px;top:43px" width="17" height="16" viewBox="0 0 17 16"><rect x="0" y="0" width="16" height="7" fill="#1670e0"/><text x="8" y="6.300" font-family="Liberation Sans,sans-serif" font-weight="bold" font-size="8" fill="#fff" text-anchor="middle" textLength="14" lengthAdjust="spacingAndGlyphs">Dev</text><rect x="0" y="6" width="5.500" height="3.200" fill="#f8b820" stroke="#a06000" stroke-width=".6"/><rect x="0" y="11.500" width="5.500" height="3.200" fill="#f8b820" stroke="#a06000" stroke-width=".6"/><rect x="11" y="6" width="5" height="2.600" fill="#f06080"/><path d="M5.500 7.500h2.500v6h-2.500M8 10h2" stroke="#222" stroke-width="1" fill="none"/><path d="M8.600 8.500h2.400v1.800h1.400v-1.800h2.400l1.200 5v2h-3.200v-2.800h-2.200v2.800h-3.200v-2z" fill="#141414"/></svg>
<svg class="a" style="left:91px;top:43px" width="17" height="16" viewBox="0 0 17 16"><rect x="0" y="0" width="16" height="7" fill="#1670e0"/><text x="8" y="6.300" font-family="Liberation Sans,sans-serif" font-weight="bold" font-size="8" fill="#fff" text-anchor="middle" textLength="14" lengthAdjust="spacingAndGlyphs">Dev</text><path d="M0 10h16M4 10v2M12 10v2" stroke="#111" stroke-width="1.100"/><rect x="0.500" y="11.500" width="6.500" height="4" fill="#666" stroke="#222" stroke-width=".7"/><rect x="9" y="11.500" width="6.500" height="4" fill="#666" stroke="#222" stroke-width=".7"/></svg>
<div class="a" style="left:111.5px;top:40px;width:2px;height:20px;border-left:1px solid #8d97b0;border-right:1px solid #dde2ee"></div>
<svg class="a" style="left:118px;top:43px" width="18" height="16" viewBox="0 0 18 16"><path d="M1 14.500h11M1 12h11" stroke="#a0a7b8" stroke-width="1.200"/><path d="M3 11v-4h2v-2l4 3.500" fill="none" stroke="#a0a7b8" stroke-width="1.200"/><path d="M6 7l4-4 3 2 4-3v7l-4-2-3 3z" fill="#aab0c0"/></svg>
<div class="a" style="left:139.5px;top:40px;width:2px;height:20px;border-left:1px solid #8d97b0;border-right:1px solid #dde2ee"></div>
<div class="a" style="left:144px;top:39px;width:22px;height:22px;background:#fdf5c8;border:1px solid #e6c95a;border-radius:2px"></div>
<svg class="a" style="left:146.5px;top:42px" width="18" height="17" viewBox="0 0 18 17"><rect x="0.500" y="0.500" width="13" height="9.500" fill="#fff" stroke="#333" stroke-width="1"/><path d="M3 2.500h3M3 7.500h3M4.500 2.500v5" stroke="#222" stroke-width=".9"/><path d="M7 13l1.500-4 6-5.500 2.500 2.500-6 5.500z" fill="#48c038" stroke="#1a7010" stroke-width=".7"/><path d="M6 15l1-3 2.500 2.500z" fill="#222"/><path d="M5 15.500h6" stroke="#222" stroke-width="1"/></svg>
<svg class="a" style="left:170px;top:42px" width="17" height="17" viewBox="0 0 17 17"><text x="8.500" y="7" font-family="Liberation Serif,serif" font-weight="bold" font-size="9.500" fill="#1018d8" text-anchor="middle">I/o</text><path d="M1 7l4 1-3 3 4 .5-3.500 3.500" fill="none" stroke="#f87010" stroke-width="1.600"/><path d="M6.500 11.500l3 3.500 6-6.500" fill="none" stroke="#e01020" stroke-width="1.700"/></svg>
<div class="a" style="left:189px;top:40px;width:2px;height:20px;border-left:1px solid #8d97b0;border-right:1px solid #dde2ee"></div>
<svg class="a" style="left:196px;top:43px" width="18" height="16" viewBox="0 0 18 16"><path d="M5 0v5M4 3l-2 5M6 3l2 5M3 9l-2 5M7 9h4l3-3M11 9l4 4" stroke="#b8bccb" stroke-width="1.300" fill="none"/><circle cx="12" cy="9" r="2" fill="none" stroke="#c8b8c0" stroke-width="1"/></svg>
<div class="a" style="left:217.5px;top:40px;width:2px;height:20px;border-left:1px solid #8d97b0;border-right:1px solid #dde2ee"></div>
<svg class="a" style="left:225px;top:43px" width="17" height="16" viewBox="0 0 17 16"><rect x="0" y="0" width="16" height="7" fill="#1670e0"/><text x="8" y="6.300" font-family="Liberation Sans,sans-serif" font-weight="bold" font-size="8" fill="#fff" text-anchor="middle" textLength="14" lengthAdjust="spacingAndGlyphs">Dev</text><path d="M1.500 12.500c3-4.500 10-4.500 13 0-3 4-10 4-13 0z" fill="#fff" stroke="#111" stroke-width="1.200"/><circle cx="8" cy="12.500" r="2.300" fill="#111"/></svg>
<svg class="a" style="left:242px;top:47.5px" width="7" height="4" viewBox="0 0 7 4"><path d="M0 0h7l-3.500 4z" fill="#111"/></svg>
<div class="a" style="left:252.5px;top:40px;width:2px;height:20px;border-left:1px solid #8d97b0;border-right:1px solid #dde2ee"></div>
<svg class="a" style="left:259.5px;top:42px" width="19" height="17" viewBox="0 0 19 17"><path d="M0.500 3.500h9M5 0v5" stroke="#444" stroke-width="1"/><ellipse cx="5" cy="3.500" rx="3.300" ry="1.600" fill="none" stroke="#555" stroke-width=".8"/><rect x="2.500" y="6" width="5" height="9.500" fill="#4a4e58" stroke="#222" stroke-width=".7"/><rect x="3.500" y="7.500" width="3" height="2" fill="#9aa0b0"/><path d="M14.38 12.88l3.200 3.200" stroke="#111" stroke-width="2"/><circle cx="12" cy="10.5" r="3.4" fill="#fff" stroke="#111" stroke-width="1.300"/></svg>
<svg class="a" style="left:276.5px;top:47.5px" width="7" height="4" viewBox="0 0 7 4"><path d="M0 0h7l-3.500 4z" fill="#111"/></svg>
<div class="a" style="left:287.5px;top:40px;width:2px;height:20px;border-left:1px solid #8d97b0;border-right:1px solid #dde2ee"></div>
<svg class="a" style="left:295px;top:43px" width="17" height="16" viewBox="0 0 17 16"><rect x="0.500" y="0.500" width="13" height="10.500" fill="#fff" stroke="#1010c8" stroke-width="1"/><rect x="0" y="0" width="14" height="3.500" fill="#0808d0"/><path d="M2 6h9" stroke="#30a840" stroke-width="1.200"/><path d="M2 8.500h5" stroke="#e09030" stroke-width="1.200"/><path d="M12.6 12.6l3.200 3.200" stroke="#111" stroke-width="2"/><circle cx="10.5" cy="10.5" r="3" fill="#fff" stroke="#111" stroke-width="1.300"/></svg>
<svg class="a" style="left:317px;top:43px" width="18" height="16" viewBox="0 0 18 16"><path d="M1 8v6M17 8v6M1 11h16" stroke="#c2c6d4" stroke-width="1.300"/><path d="M6 3h6l-3 4.500z" fill="#b4b8c8"/><rect x="2" y="1" width="14" height="8" fill="none" stroke="#d0d4e0" stroke-width=".8"/></svg>
<svg class="a" style="left:340.5px;top:54.5px" width="6" height="7" viewBox="0 0 8 8"><path d="M0.500 1h7" stroke="#111" stroke-width="1.300"/><path d="M0.300 3.500h7.400l-3.700 4z" fill="#111"/></svg>
<div class="a tbp" style="left:351px;top:38px;width:109px;height:23px;box-shadow:0 2px 3px rgba(196,203,222,.7)"></div>
<div class="a" style="left:355px;top:42px;width:2px;height:14px;background:repeating-linear-gradient(#5c667e 0,#5c667e 2px,transparent 2px,transparent 4px)"></div>
<svg class="a" style="left:362px;top:43px" width="17" height="16" viewBox="0 0 17 16"><rect x="0.500" y="1.500" width="15" height="12" fill="#c9cdd9" stroke="#8c92a2" stroke-width="1"/><rect x="0.500" y="1.500" width="15" height="2.500" fill="#a4aaba"/><path d="M2.500 7h5M2.500 10h5" stroke="#7c8292" stroke-width="1.200"/><path d="M9.500 7h1.200M12 7h1.200M9.500 10h1.200M12 10h1.200" stroke="#7c8292" stroke-width="1.200"/></svg>
<svg class="a" style="left:384px;top:43px" width="17" height="16" viewBox="0 0 17 16"><path d="M0 4h2.500M0 8h2.500M0 12h2.500" stroke="#7c8292" stroke-width="1.200"/><rect x="4" y="1" width="10" height="13.500" fill="#b8bdca" stroke="#747a8a" stroke-width="1.200"/><rect x="6.500" y="4" width="4.500" height="7" fill="#d8dce6" stroke="#747a8a" stroke-width="1"/><path d="M8 6.500h1.500v2" stroke="#747a8a" stroke-width=".9" fill="none"/><path d="M14.500 3v9.500" stroke="#8c92a2" stroke-width="1.400"/></svg>
<svg class="a" style="left:406px;top:43px" width="17" height="16" viewBox="0 0 17 16"><rect x="0.500" y="1" width="15" height="13.500" fill="#cfd3de" stroke="#8c92a2" stroke-width="1"/><path d="M0.500 4.300h15M0.500 7.700h15M0.500 11h15" stroke="#8c92a2" stroke-width="1.100"/></svg>
<svg class="a" style="left:427px;top:43px" width="18" height="16" viewBox="0 0 18 16"><path d="M3 1h4v4l-2 3v6h-3.500v-5l2-4z" fill="#8c92a2"/><path d="M5 8h3v6.500h-3z" fill="#a0a6b6"/><path d="M8 1.500h9M8 4h9M8 6.500h9M11 1.500v5M14 1.500v5" stroke="#c0c5d2" stroke-width="1"/><rect x="8" y="1.500" width="9" height="5" fill="none" stroke="#b0b5c4" stroke-width=".8"/></svg>
<svg class="a" style="left:451.5px;top:54.5px" width="6" height="7" viewBox="0 0 8 8"><path d="M0.500 1h7" stroke="#111" stroke-width="1.300"/><path d="M0.300 3.500h7.400l-3.700 4z" fill="#111"/></svg>
<!--LEFT-->
<div class="a" style="left:-2px;top:144px;width:32px;height:22px;background:#fff;border:1px solid #eef1f8"></div>
<div class="a" style="left:17px;top:145px;width:12px;height:20px;background:#d4d8e6"></div>
<svg class="a" style="left:19.500px;top:153px" width="7" height="4" viewBox="0 0 7 4"><path d="M0 0h7l-3.500 4z" fill="#111"/></svg>
<svg class="a" style="left:34px;top:147px" width="17" height="16" viewBox="0 0 17 16"><rect x="0.500" y="2.500" width="14" height="12" rx="2" fill="#f0b818" stroke="#8a6a10" stroke-width="1"/><rect x="3" y="1" width="8" height="6" fill="#3a3a3a"/><path d="M4 3h6M4 5h6" stroke="#ddd" stroke-width=".8"/><path d="M5 13.500l8-9" stroke="#2060e0" stroke-width="2"/><circle cx="13.500" cy="3.500" r="2" fill="none" stroke="#2060e0" stroke-width="1.300"/></svg>
<div class="a" style="left:13px;top:182px;width:79px;height:22px;background:#fff;border:1px solid #7b8aa8"></div>
<div class="a" style="left:17px;top:183px;font-family:'Liberation Serif','Noto Serif CJK SC',serif;font-size:13.500px;line-height:20px;color:#111">d108</div>
<svg class="a" style="left:77px;top:189px" width="11" height="8" viewBox="0 0 11 8"><path d="M1.500 1.500l4 4.200 4-4.200" fill="none" stroke="#444" stroke-width="1.200"/></svg>
<div class="a" style="left:-20px;top:220px;width:94px;height:29px;background:#e1e1e1;border:1px solid #adadad"></div>
<div class="a" style="left:-1px;top:224px;font-family:'Liberation Serif','Noto Sans CJK SC',serif;font-size:12px;line-height:20px;color:#111;white-space:pre;letter-spacing:-0.300px">附搜索<span style="font-family:'Liberation Mono',monospace;letter-spacing:-1px">(L)</span></div>
<!--OVERLAY-->
<div class="a" style="left:649px;top:0;width:420px;height:18.500px;background:#2e2e2e"></div>
<div class="a" style="left:649px;top:-4.300px;width:60px;text-align:center;color:#fff;font-size:12.500px;line-height:16px">缩放</div>
<div class="a" style="left:709px;top:-4.300px;width:60px;text-align:center;color:#fff;font-size:12.500px;line-height:16px">语音</div>
<div class="a" style="left:769px;top:-4.300px;width:60px;text-align:center;color:#fff;font-size:12.500px;line-height:16px">白板</div>
<div class="a" style="left:829px;top:-4.300px;width:60px;text-align:center;color:#fff;font-size:12.500px;line-height:16px">录像</div>
<div class="a" style="left:889px;top:-4.300px;width:60px;text-align:center;color:#fff;font-size:12.500px;line-height:16px">全屏</div>
<div class="a" style="left:949px;top:-4.300px;width:60px;text-align:center;color:#fff;font-size:12.500px;line-height:16px">更多</div>
<div class="a" style="left:1009px;top:-4.300px;width:60px;text-align:center;color:#fff;font-size:12.500px;line-height:16px">结束</div>
<div class="a" style="left:1580px;top:-8px;width:138px;height:40px;border-radius:20px;background:#f6f6f6;box-shadow:0 1px 3px rgba(80,90,120,.35)"></div>
<div class="a" style="left:1571px;top:-19px;width:62px;height:62px;border-radius:31px;background:#48dc72;box-shadow:0 0 3px 1px rgba(120,235,150,.8)"></div>
<div class="a" style="left:1577px;top:-13px;width:50px;height:50px;border-radius:25px;background:#f7f7f7"></div>
<div class="a" style="left:1585.500px;top:-1.500px;width:40px;height:26px;font-size:23.500px;line-height:26px;color:#555;letter-spacing:-1px;font-family:'Liberation Sans',sans-serif;font-weight:100;-webkit-text-stroke:0.600px #f7f7f7;white-space:pre">34<span style="font-size:12px;letter-spacing:0;-webkit-text-stroke:0.2px #f7f7f7">%</span></div>
<svg class="a" style="left:1638.500px;top:-4.500px" width="8" height="10" viewBox="0 0 9 12"><path d="M4.500 11v-9M1 5.500l3.500-3.800 3.500 3.800" fill="none" stroke="#3a8cf0" stroke-width="1.300"/></svg>
<svg class="a" style="left:1638.500px;top:14px" width="8" height="9.500" viewBox="0 0 9 12"><path d="M4.500 1v9M1 6.500l3.500 3.800 3.500-3.800" fill="none" stroke="#20b860" stroke-width="1.300"/></svg>
<div class="a" style="left:1646px;top:-3px;width:40px;text-align:right;font-size:9px;line-height:12px;color:#222">39.4K/s</div>
<div class="a" style="left:1646px;top:14px;width:40px;text-align:right;font-size:9px;line-height:12px;color:#222">12K/s</div>
<svg class="a" style="left:1692px;top:2px" width="22" height="18" viewBox="0 0 22 18"><circle cx="9" cy="9" r="7.800" fill="#3b8ff2"/><path d="M9 5.200v7.600M5.200 9h7.600" stroke="#fff" stroke-width="1.700"/><circle cx="17.500" cy="4.500" r="3.300" fill="#ea5038"/></svg>
</body></html>
